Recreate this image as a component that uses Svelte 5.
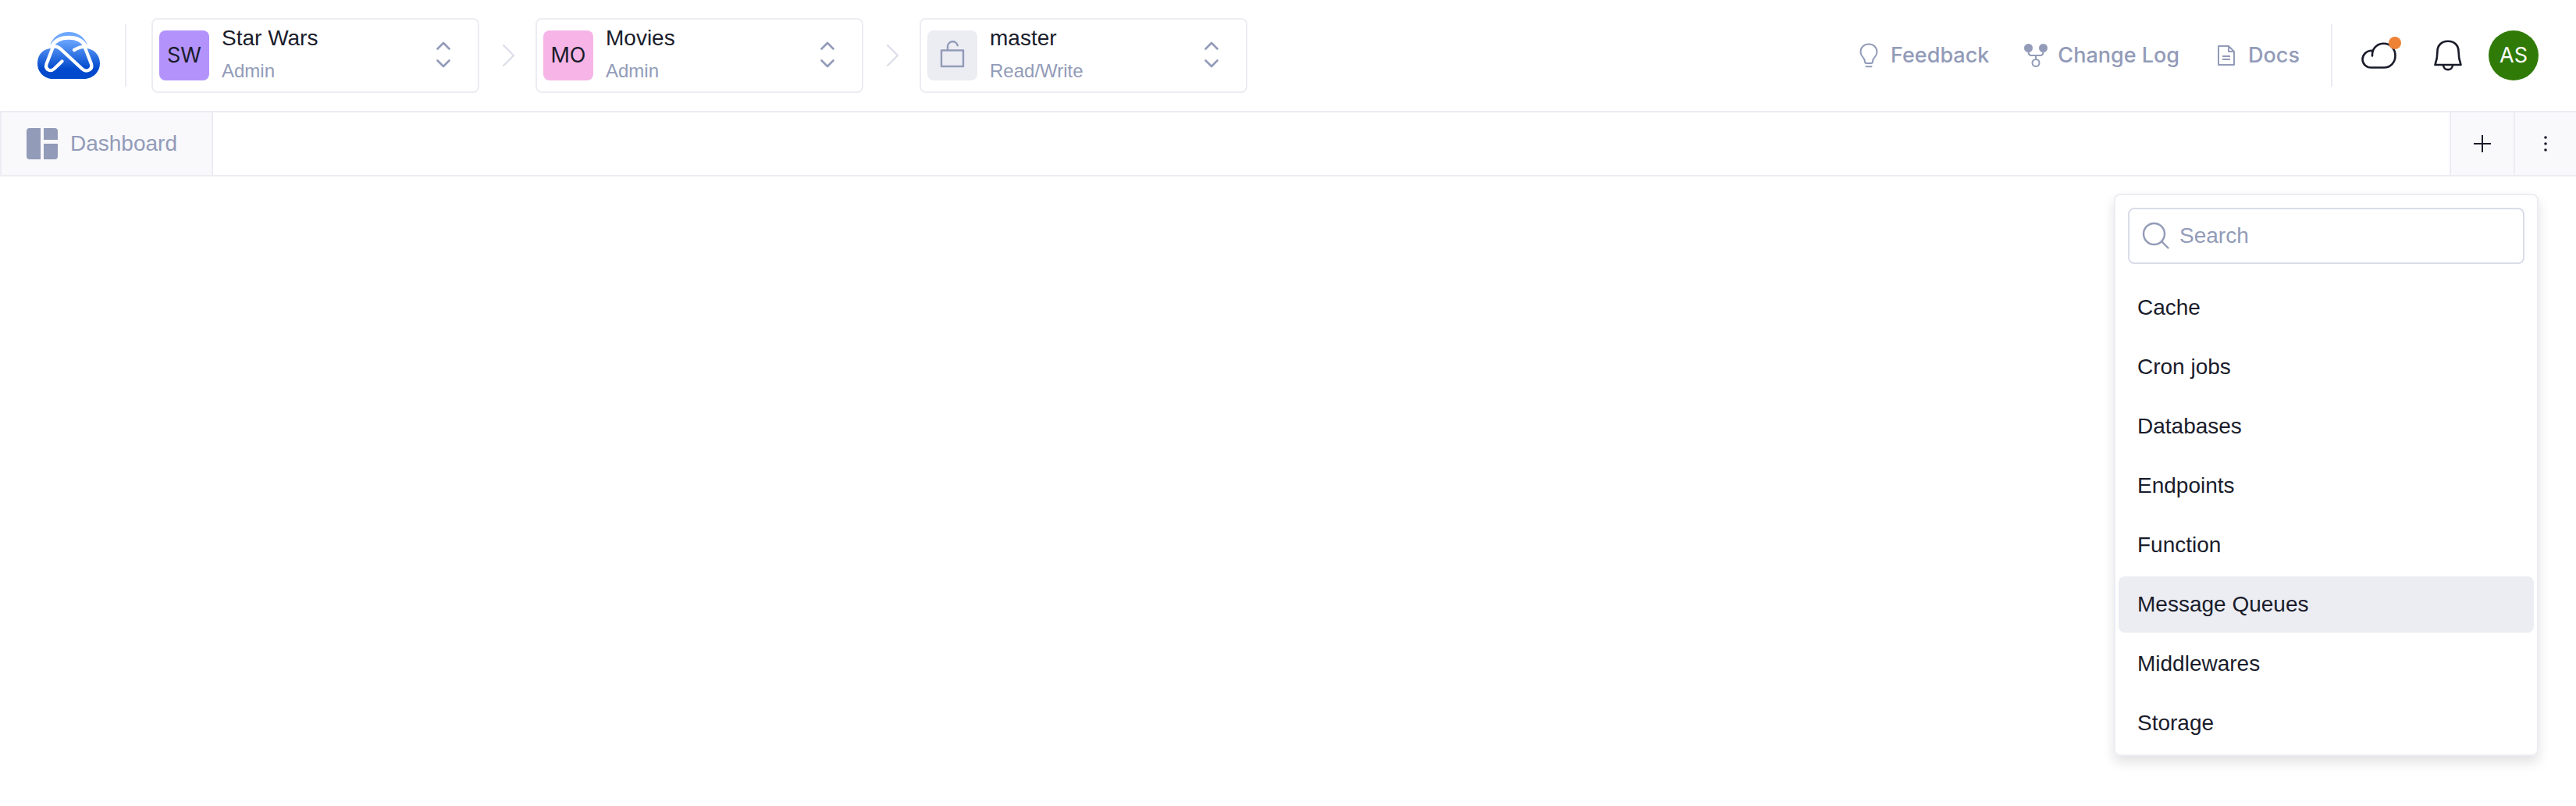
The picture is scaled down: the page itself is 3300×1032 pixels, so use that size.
<script>
  const workspaces = [
    { name: 'Star Wars', role: 'Admin', initials: 'SW', tone: 'violet' },
    { name: 'Movies', role: 'Admin', initials: 'MO', tone: 'pink' },
    { name: 'master', role: 'Read/Write', initials: '', tone: 'grey' }
  ];
  const resources = ['Cache', 'Cron jobs', 'Databases', 'Endpoints', 'Function', 'Message Queues', 'Middlewares', 'Storage'];
  let selected = $state('Message Queues');
  let query = $state('');
  const visible = $derived(resources.filter((r) => r.toLowerCase().includes(query.toLowerCase())));
</script>

<header class="topbar">
  <a class="logo" href="#home" aria-label="Home">
    <svg width="80" height="60" viewBox="0 0 80 60" fill="none">
      <defs>
        <linearGradient id="cloud" x1="0" y1="10" x2="0" y2="60" gradientUnits="userSpaceOnUse">
          <stop offset="0" stop-color="#6ba6ff" />
          <stop offset="0.75" stop-color="#0049cc" />
          <stop offset="1" stop-color="#0049cc" />
        </linearGradient>
      </defs>
      <path d="M16.500 15.700C20 6 29 0 40 0s20 6 23.500 15.700z" fill="#6ea8ff" />
      <path d="M19 21C22 14 30 9.500 40 9.500S58 14 61 21c11 0 19 8 19 19s-9 20-20 20H20C9 60 0 52 0 40s8-19 19-19z" fill="url(#cloud)" />
      <path d="M18.500 18.500C22 11 30 7.300 40 7.300s18 3.700 21.500 11.200" stroke="#fff" stroke-width="5" />
      <path d="M31.500 37.500L21.500 47c-5 4.500-12 1-10-6L20 19c4-1 6-.5 10 3l27 25c6 5.500 14 1 12-6L60.500 19c-5-.5-9 1.500-13.500 4" stroke="#fff" stroke-width="4.300" stroke-linecap="round" stroke-linejoin="round" />
    </svg>
  </a>
  <span class="rule"></span>

  <nav class="crumbs" aria-label="Workspace">
    {#each workspaces as item, i}
      {#if i > 0}
        <svg class="separator" width="72" height="32" viewBox="0 0 72 32" fill="none" stroke="#dadce8" stroke-width="2" stroke-linecap="round" stroke-linejoin="round">
          <path d="M31 3l13 13-13 13" />
        </svg>
      {/if}
      <button class="switcher" type="button">
        <span class="badge {item.tone}">
          {#if item.initials}
            {item.initials}
          {:else}
            <svg width="32" height="40" viewBox="0 0 32 40" fill="none" stroke="#929bb8" stroke-width="2.400" stroke-linecap="round" stroke-linejoin="round">
              <rect x="2" y="13.500" width="28" height="20.500" />
              <path d="M10 13V8.500a6.500 6.500 0 0 1 12.800-1.300" />
            </svg>
          {/if}
        </span>
        <span class="labels">
          <span class="name">{item.name}</span>
          <span class="role">{item.role}</span>
        </span>
        <svg class="updown" width="20" height="36" viewBox="0 0 20 36" fill="none" stroke="#929bb8" stroke-width="2.600" stroke-linecap="round" stroke-linejoin="round">
          <path d="M2.500 9.500L10 2l7.500 7.500M2.500 24.500L10 32l7.500-7.500" />
        </svg>
      </button>
    {/each}
  </nav>

  <nav class="links" aria-label="Help">
    <a href="#feedback">
      <svg width="32" height="32" viewBox="0 0 32 32" fill="none" stroke="currentColor" stroke-width="2" stroke-linecap="round" stroke-linejoin="round">
        <path d="M13 26c-1.500 0-2-1-2-2.500 0-5-5.500-5.500-5.500-12C5.500 5.500 10 1.500 16 1.500s10.500 4 10.500 10c0 6.500-5.500 7-5.500 12 0 1.500-.5 2.500-2 2.500zM12.500 30.300h7" />
      </svg>
      Feedback
    </a>
    <a href="#changelog">
      <svg width="32" height="32" viewBox="0 0 32 32" fill="none" stroke="currentColor" stroke-width="2">
        <circle cx="6.500" cy="6.500" r="5.500" fill="currentColor" stroke="none" />
        <circle cx="25.500" cy="6.500" r="5.500" fill="currentColor" stroke="none" />
        <path d="M6.500 11c0 3.500 1 5 4 5h11c3 0 4-1.500 4-5M16 16v5" />
        <circle cx="16" cy="25.500" r="4.500" />
      </svg>
      Change Log
    </a>
    <a href="#docs">
      <svg width="32" height="32" viewBox="0 0 32 32" fill="none" stroke="currentColor" stroke-width="2" stroke-linejoin="round">
        <path d="M6 4h13l7 7v17H6zM19 4v7h7M11 17h10M11 21h10" />
      </svg>
      Docs
    </a>
  </nav>
  <span class="rule"></span>

  <button class="icon cloud" type="button" aria-label="Deployments">
    <svg width="48" height="36" viewBox="0 0 48 36" fill="none" stroke="#1a1c2b" stroke-width="2.600" stroke-linecap="round" stroke-linejoin="round">
      <path d="M15 18.500C14.500 9 21 2.700 29.500 2.700c9 0 15 7 15 15.500S38.500 33.500 30 33.500H13.500C7 33.500 2.500 28.500 2.500 23S7 11.500 15.300 11.700" />
    </svg>
    <span class="dot"></span>
  </button>
  <button class="icon bell" type="button" aria-label="Notifications">
    <svg width="36" height="40" viewBox="0 0 36 40" fill="none" stroke="#1a1c2b" stroke-width="2.600" stroke-linecap="round" stroke-linejoin="round">
      <path d="M18 1.700C9.500 1.700 4.500 7.500 4.500 14.500c0 9-1 12-3 17.500h33c-2-5.500-3-8.500-3-17.500C31.500 7.500 26.500 1.700 18 1.700zM12 32.500c.5 7.500 11.500 7.500 12 0" />
    </svg>
  </button>
  <button class="avatar" type="button">AS</button>
</header>

<div class="tabs">
  <a class="tab" href="#dashboard">
    <svg width="40" height="40" viewBox="0 0 40 40" fill="currentColor">
      <path d="M4 0h14v40H4a4 4 0 0 1-4-4V4a4 4 0 0 1 4-4zM22 0h14a4 4 0 0 1 4 4v11H22zM22 20h18v16a4 4 0 0 1-4 4H22z" />
    </svg>
    Dashboard
  </a>
  <button class="tool" type="button" aria-label="Add tab">
    <svg width="24" height="24" viewBox="0 0 24 24" stroke="#1a1c2b" stroke-width="2"><path d="M12 1v22M1 12h22" /></svg>
  </button>
  <button class="tool" type="button" aria-label="More">
    <svg width="24" height="24" viewBox="0 0 24 24" fill="#1a1c2b"><circle cx="12" cy="4" r="1.800" /><circle cx="12" cy="12" r="1.800" /><circle cx="12" cy="20" r="1.800" /></svg>
  </button>
</div>

<main>
  <section class="menu" aria-label="Add resource">
    <label class="search">
      <svg width="36" height="36" viewBox="0 0 36 36" fill="none" stroke="#929bb8" stroke-width="2.400" stroke-linecap="round">
        <circle cx="15.500" cy="15.500" r="13.500" /><path d="M25 25l8.500 8.500" />
      </svg>
      <input type="text" placeholder="Search" aria-label="Search" bind:value={query} />
    </label>
    <ul>
      {#each visible as name}
        <li><button type="button" class:active={selected === name} onclick={() => (selected = name)}>{name}</button></li>
      {/each}
    </ul>
  </section>
</main>

<style>
  :global(body) {
    background: #fff;
    color: #1a1c2b;
    font: 28px/36px 'Liberation Sans', Arial, sans-serif;
  }
  * { box-sizing: border-box; }
  button, input { font: inherit; color: inherit; padding: 0; border: 0; background: none; }
  button { cursor: pointer; }
  a { color: #929bb8; text-decoration: none; }
  svg { display: block; flex: none; }
  .topbar {
    display: flex;
    align-items: center;
    height: 144px;
    padding: 0 48px;
    border-bottom: 2px solid #ecedf3;
  }
  .rule { width: 2px; height: 80px; background: #ecedf3; flex: none; }
  .logo { margin-right: 32px; }
  .crumbs { display: flex; align-items: center; margin-left: 32px; }
  .switcher {
    display: flex;
    align-items: center;
    width: 420px;
    height: 96px;
    padding: 0 34px 0 8px;
    border: 2px solid #ecedf3;
    border-radius: 8px;
    text-align: left;
  }
  .badge {
    display: grid;
    place-items: center;
    width: 64px;
    height: 64px;
    margin-right: 16px;
    border-radius: 8px;
    flex: none;
  }
  .badge, .avatar { font-family: Inter, sans-serif; font-size: 27px; }
  .violet { background: #b393fb; }
  .pink { background: #f6b5e6; }
  .grey { background: #ecedf3; }
  .labels { display: flex; flex-direction: column; gap: 8px; flex: 1; padding-bottom: 4px; }
  .name { line-height: 36px; }
  .role { font-size: 24px; line-height: 32px; color: #929bb8; }
  .links { display: flex; align-items: center; gap: 44px; margin-left: auto; margin-right: 40px; font-family: Inter, sans-serif; font-size: 27px; font-weight: 500; }
  .links a { display: flex; align-items: center; gap: 12px; }
  .icon { display: grid; place-items: center; position: relative; flex: none; }
  .cloud { margin-left: 36px; }
  .bell { margin: 0 34px 0 46px; }
  .dot { position: absolute; top: -6px; right: -4px; width: 16px; height: 16px; border-radius: 50%; background: #ee8336; }
  .avatar { width: 64px; height: 64px; border-radius: 50%; background: #307a08; color: #fff; flex: none; }
  .tabs { display: flex; height: 82px; border-bottom: 2px solid #ecedf3; }
  .tab {
    display: flex;
    align-items: center;
    gap: 16px;
    padding: 0 44px 0 32px;
    margin-right: auto;
    border: solid #ecedf3;
    border-width: 0 2px;
    background: #f9f9fc;
  }
  .tool { display: grid; place-items: center; width: 82px; border-left: 2px solid #ecedf3; background: #f9f9fc; }
  .tool:last-child { width: 80px; }
  main { display: flex; justify-content: flex-end; padding: 22px 48px 64px; }
  .menu {
    width: 544px;
    padding: 16px 4px 4px;
    border: 2px solid #ecedf3;
    border-radius: 8px;
    box-shadow: 0 8px 16px rgba(0, 0, 0, 0.12);
  }
  .search {
    display: flex;
    align-items: center;
    gap: 12px;
    height: 72px;
    margin: 0 12px 20px;
    padding: 0 16px;
    border: 2px solid #dadce8;
    border-radius: 8px;
  }
  .search input { flex: 1; min-width: 0; height: 100%; outline: none; }
  .search input::placeholder { color: #929bb8; opacity: 1; }
  ul { display: grid; gap: 4px; margin: 0; padding: 0; list-style: none; }
  li button { display: block; width: 100%; height: 72px; padding: 0 24px; border-radius: 8px; text-align: left; }
  .active { background: #ecedf3; }
</style>
